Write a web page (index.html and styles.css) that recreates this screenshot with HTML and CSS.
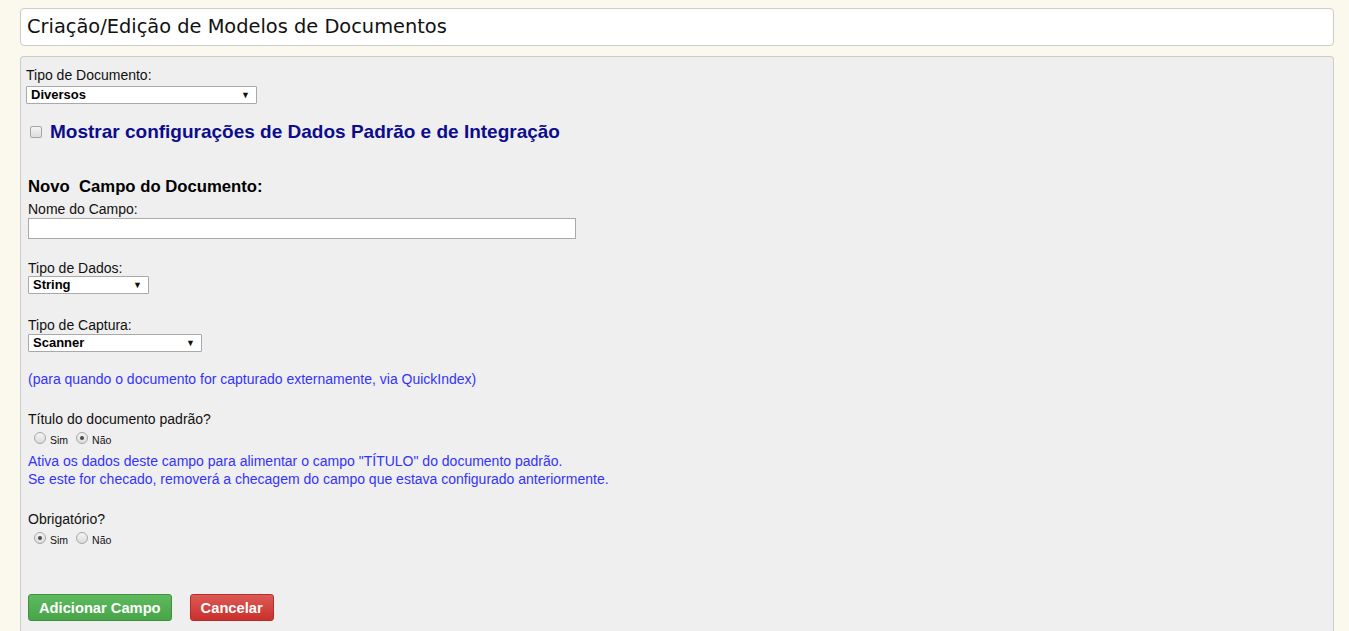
FILE: index.html
```html
<!DOCTYPE html>
<html lang="pt">
<head>
<meta charset="utf-8">
<title>Modelos de Documentos</title>
<link rel="stylesheet" href="styles.css">
</head>
<body>
<div class="page">
  <div class="header">Criação/Edição de Modelos de Documentos</div>
  <div class="panel">
    <div class="label">Tipo de Documento:</div>
    <span class="sel sel-doc"><select><option>Diversos</option></select></span>

    <label class="toggle"><input type="checkbox"><span>Mostrar configurações de Dados Padrão e de Integração</span></label>

    <div class="section">
      <div class="section-title">Novo&nbsp; Campo do Documento:</div>
      <div class="label">Nome do Campo:</div>
      <input class="text" type="text">

      <div class="label gap">Tipo de Dados:</div>
      <span class="sel sel-dados"><select><option>String</option></select></span>

      <div class="label gap-cap">Tipo de Captura:</div>
      <span class="sel sel-cap"><select><option>Scanner</option></select></span>

      <div class="note gap-note">(para quando o documento for capturado externamente, via QuickIndex)</div>

      <div class="label gap-big">Título do documento padrão?</div>
      <div class="radios">
        <label><input type="radio" name="tit"><span>Sim</span></label>
        <label><input type="radio" name="tit" checked><span>Não</span></label>
      </div>
      <div class="note">Ativa os dados deste campo para alimentar o campo "TÍTULO" do documento padrão.<br>Se este for checado, removerá a checagem do campo que estava configurado anteriormente.</div>

      <div class="label gap-big">Obrigatório?</div>
      <div class="radios">
        <label><input type="radio" name="obr" checked><span>Sim</span></label>
        <label><input type="radio" name="obr"><span>Não</span></label>
      </div>

      <div class="actions">
        <button class="btn btn-green">Adicionar Campo</button>
        <button class="btn btn-red">Cancelar</button>
      </div>
    </div>
  </div>
</div>
</body>
</html>
```

FILE: styles.css
```css
html, body {
  margin: 0;
  padding: 0;
  background: #fbf8ed;
  height: 100%;
  overflow: hidden;
}
body {
  font-family: "Liberation Sans", Arial, sans-serif;
  font-size: 14px;
  color: #111;
}
.page {
  padding: 8px 15px 0 20px;
}
.header {
  background: #fff;
  border: 1px solid #cccccc;
  border-radius: 4px;
  height: 36px;
  line-height: 36px;
  padding-left: 6px;
  font-family: "DejaVu Sans", Verdana, sans-serif;
  font-size: 19.4px;
  color: #111;
}
.panel {
  margin-top: 10px;
  background: #efefef;
  border: 1px solid #cccccc;
  border-bottom: none;
  border-radius: 4px 4px 0 0;
  padding: 10px 6px 40px 5px;
  height: 600px;
  box-sizing: border-box;
}
.label {
  line-height: 16px;
  height: 16px;
}
.sel {
  display: inline-block;
  position: relative;
  margin-top: 3px;
  vertical-align: top;
}
.sel select {
  appearance: none;
  -webkit-appearance: none;
  display: block;
  height: 18px;
  border: 1px solid #a9a9a9;
  border-radius: 1px;
  background: #fff;
  font-family: "Liberation Sans", Arial, sans-serif;
  font-weight: bold;
  font-size: 13px;
  color: #000;
  padding: 0 0 0 4px;
  margin: 0;
  line-height: 16px;
}
.sel::after {
  content: "▼";
  position: absolute;
  right: 7px;
  top: 3px;
  font-size: 9px;
  line-height: 12px;
  color: #111;
  pointer-events: none;
}
.sel-doc select { width: 231px; }
.sel-dados select { width: 121px; }
.sel-cap select { width: 174px; }

input[type="checkbox"],
input[type="radio"] {
  appearance: none;
  -webkit-appearance: none;
  width: 12px;
  height: 12px;
  box-sizing: border-box;
  border: 1px solid #a6a6a6;
  background: linear-gradient(#f4f4f4, #dcdcdc);
  position: relative;
  flex: none;
}
input[type="checkbox"] {
  border-radius: 2px;
}
input[type="radio"] {
  border-radius: 50%;
}
input[type="radio"]:checked::after {
  content: "";
  position: absolute;
  left: 3px;
  top: 3px;
  width: 4px;
  height: 4px;
  border-radius: 50%;
  background: #4a4a4a;
}

.toggle {
  display: flex;
  align-items: center;
  margin-top: 19px;
  height: 18px;
  padding-left: 4px;
}
.toggle input {
  margin: 0 8px 0 0;
}
.toggle span {
  font-weight: bold;
  font-size: 19px;
  color: #0c0c8c;
  line-height: 18px;
}
.section {
  padding-left: 2px;
  margin-top: 37px;
}
.section-title {
  font-weight: bold;
  font-size: 16.7px;
  line-height: 18px;
  height: 18px;
  color: #000;
  margin-bottom: 5px;
}
.text {
  display: block;
  width: 548px;
  height: 21px;
  box-sizing: border-box;
  border: 1px solid #a9a9a9;
  background: #fff;
  margin: 1px 0 0 0;
  padding: 0;
}
.gap { margin-top: 21px; }
.gap-cap { margin-top: 23px; }
.gap-cap + .sel { margin-top: 1px; }
.gap + .sel { margin-top: 0; }
.gap-note { margin-top: 18px; }
.gap-big { margin-top: 23px; }
.note {
  color: #3333ff;
  line-height: 18px;
}
.radios {
  display: flex;
  align-items: center;
  height: 14px;
  margin: 4px 0 7px 6px;
  gap: 8px;
}
.radios label {
  display: flex;
  align-items: center;
}
.radios input {
  margin: 0 4px 0 0;
}
.radios span {
  font-size: 10.5px;
  line-height: 12px;
  padding-top: 3px;
}
.actions {
  display: flex;
  gap: 18px;
  margin-top: 49px;
}
.btn {
  height: 27px;
  padding: 0 10px;
  border-radius: 3px;
  font-family: "Liberation Sans", Arial, sans-serif;
  font-weight: bold;
  font-size: 14.7px;
  color: #fff;
  cursor: pointer;
}
.btn-green {
  background: linear-gradient(#5fba5f, #47a447);
  border: 1px solid #3e8f3e;
}
.btn-red {
  background: linear-gradient(#dc5a56, #c9302c);
  border: 1px solid #b92c28;
}
```
